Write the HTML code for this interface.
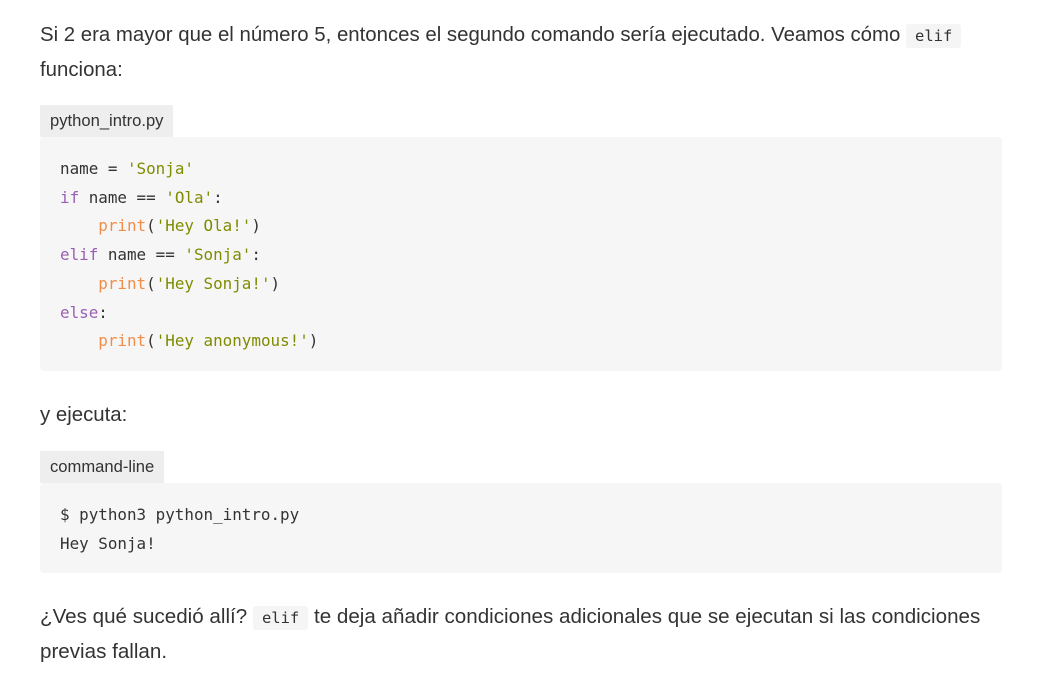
<!DOCTYPE html>
<html><head><meta charset="utf-8"><style>
body{margin:0;background:#fff;font-family:"Liberation Sans",sans-serif;color:#333;}
.wrap{position:absolute;left:40px;width:962px;}
p{margin:0;font-size:20.4px;line-height:34px;}
code{font-family:"DejaVu Sans Mono",monospace;font-size:15.5px;background:#f5f5f5;padding:3px 9px;border-radius:3px;}
.lab{display:inline-block;background:#eeeeee;font-size:16.6px;padding:0 10px;height:32px;line-height:32px;color:#333;}
pre{margin:0;background:#f6f6f6;border-radius:4px;font-family:"DejaVu Sans Mono",monospace;font-size:15.9px;line-height:28.7px;padding:18px 20px 15px;color:#333;}
.k{color:#9a5fb4}.s{color:#7f8c00}.f{color:#f08d49}
</style></head><body>
<div class="wrap" style="top:18px"><p>Si 2 era mayor que el número 5, entonces el segundo comando sería ejecutado. Veamos cómo <code>elif</code><br>funciona:</p></div>
<div class="wrap" style="top:105px"><span class="lab">python_intro.py</span></div>
<div class="wrap" style="top:137px"><pre>name = <span class="s">'Sonja'</span>
<span class="k">if</span> name == <span class="s">'Ola'</span>:
    <span class="f">print</span>(<span class="s">'Hey Ola!'</span>)
<span class="k">elif</span> name == <span class="s">'Sonja'</span>:
    <span class="f">print</span>(<span class="s">'Hey Sonja!'</span>)
<span class="k">else</span>:
    <span class="f">print</span>(<span class="s">'Hey anonymous!'</span>)</pre></div>
<div class="wrap" style="top:398px"><p>y ejecuta:</p></div>
<div class="wrap" style="top:451px"><span class="lab">command-line</span></div>
<div class="wrap" style="top:483px"><pre>$ python3 python_intro.py
Hey Sonja!</pre></div>
<div class="wrap" style="top:600px"><p style="font-size:20.6px">¿Ves qué sucedió allí? <code>elif</code> te deja añadir condiciones adicionales que se ejecutan si las condiciones<br>previas fallan.</p></div>
</body></html>
